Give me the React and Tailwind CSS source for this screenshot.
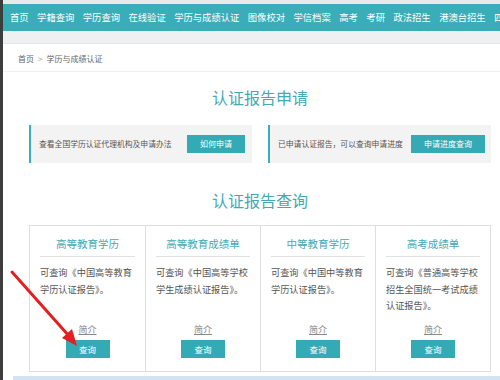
import React from "react";

const navItems = [
  "首页",
  "学籍查询",
  "学历查询",
  "在线验证",
  "学历与成绩认证",
  "图像校对",
  "学信档案",
  "高考",
  "考研",
  "政法招生",
  "港澳台招生",
  "四",
];

const cards = [
  { title: "高等教育学历", desc: "可查询《中国高等教育学历认证报告》。" },
  { title: "高等教育成绩单", desc: "可查询《中国高等学校学生成绩认证报告》。" },
  { title: "中等教育学历", desc: "可查询《中国中等教育学历认证报告》。" },
  { title: "高考成绩单", desc: "可查询《普通高等学校招生全国统一考试成绩认证报告》。" },
];

const font = { fontFamily: '"Noto Sans CJK SC", "Noto Sans", sans-serif' };

const App = () => {
  return (
    <div
      className="relative w-[500px] h-[380px] overflow-hidden bg-white flex"
      style={font}
    >
      {/* 窗口左侧暗边 */}
      <div className="w-[3px] h-full bg-[#3d3d3d] shrink-0" />

      <div className="flex-1 flex flex-col min-w-0">
        <div className="h-[4px] bg-[#e9e9e9]" />

        {/* 顶部导航 */}
        <nav className="h-[27px] bg-[#39adb8] flex items-center gap-[8.5px] pl-[7px] whitespace-nowrap overflow-hidden">
          {navItems.map((item) => (
            <span key={item} className="text-[9.3px] leading-none text-white">
              {item}
            </span>
          ))}
        </nav>

        <div className="h-[13px] bg-[#eef0f2] border-b border-[#e3e5e8]" />

        {/* 面包屑 */}
        <div className="h-[28px] border-b border-[#f0f0f0] flex items-center pl-[15px] pt-[2px] text-[8px] text-[#666] gap-[4px]">
          <span>首页</span>
          <span className="text-[#999]">&gt;</span>
          <span>学历与成绩认证</span>
        </div>

        <div className="pl-[26px] pr-[9px]">
          <h2 className="text-center text-[16px] leading-[22px] text-[#45a9b4] mt-[14px]">
            认证报告申请
          </h2>

          <div className="grid grid-cols-2 gap-[16px] mt-[17px]">
            <div className="h-[38px] bg-[#f3f3f3] border-l-2 border-[#39adb8] flex items-center justify-between pl-[8px] pr-[7px]">
              <span className="text-[7.8px] text-[#555] whitespace-nowrap">
                查看全国学历认证代理机构及申请办法
              </span>
              <button className="w-[58px] h-[18px] bg-[#34aab5] text-white text-[8px]">
                如何申请
              </button>
            </div>
            <div className="h-[38px] bg-[#f3f3f3] border-l-2 border-[#39adb8] flex items-center justify-between pl-[8px] pr-[6px]">
              <span className="text-[7.8px] text-[#555] whitespace-nowrap">
                已申请认证报告，可以查询申请进度
              </span>
              <button className="w-[74px] h-[18px] bg-[#34aab5] text-white text-[8px]">
                申请进度查询
              </button>
            </div>
          </div>

          <h2 className="text-center text-[16px] leading-[22px] text-[#45a9b4] mt-[26px]">
            认证报告查询
          </h2>

          <div className="grid grid-cols-4 mt-[14px] border border-[#dedede] h-[147px]">
            {cards.map((card, i) => (
              <div
                key={card.title}
                className={`flex flex-col px-[10px] pt-[11px] pb-[13px] ${
                  i > 0 ? "border-l border-[#dedede]" : ""
                }`}
              >
                <div className="text-center text-[10.5px] leading-[14px] text-[#45a9b4] pb-[5px] border-b border-[#e2e2e2]">
                  {card.title}
                </div>
                <p className="mt-[7px] text-[9.2px] leading-[16.5px] text-[#555] flex-1">
                  {card.desc}
                </p>
                <div className="flex flex-col items-center">
                  <a className="text-[9px] leading-[14px] text-[#888] underline">
                    简介
                  </a>
                  <button className="mt-[3px] w-[44px] h-[18px] bg-[#34aab5] text-white text-[8.5px]">
                    查询
                  </button>
                </div>
              </div>
            ))}
          </div>
        </div>

        <div className="mt-auto h-[4px] ml-[10px] bg-[#d4e3f3]" />
      </div>

      {/* 红色箭头 */}
      <svg
        className="absolute left-0 top-0 pointer-events-none"
        width="500"
        height="380"
        viewBox="0 0 500 380"
      >
        <line
          x1="12"
          y1="272"
          x2="69"
          y2="336"
          stroke="#e3201f"
          strokeWidth="3"
          strokeLinecap="round"
        />
        <polygon points="77,346 62,338 72,329" fill="#e3201f" />
      </svg>
    </div>
  );
};

export default App;
